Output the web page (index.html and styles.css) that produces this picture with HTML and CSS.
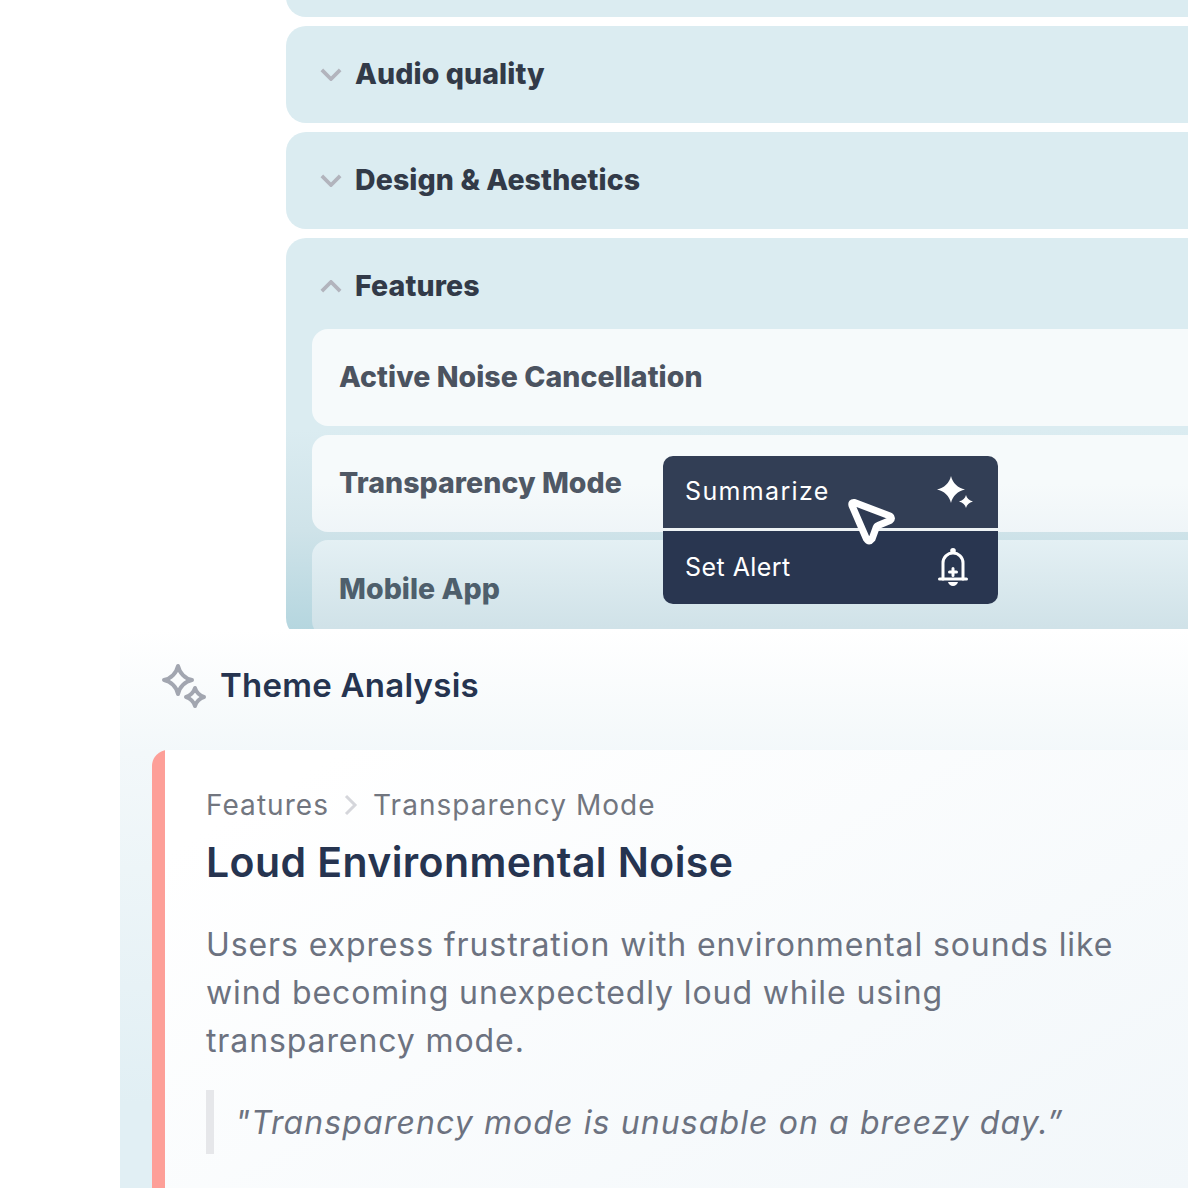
FILE: index.html
```html
<!DOCTYPE html>
<html lang="en">
<head>
<meta charset="utf-8">
<title>Theme Analysis</title>
<link rel="stylesheet" href="styles.css">
</head>
<body>
<div class="stage">
  <section class="upper">
    <div class="acc acc-top"></div>
    <div class="acc acc-closed">
      <svg class="chev" viewBox="0 0 24 14"><path d="M2 2l10 10L22 2"/></svg>
      <h2 class="acc-title">Audio quality</h2>
    </div>
    <div class="acc acc-closed">
      <svg class="chev" viewBox="0 0 24 14"><path d="M2 2l10 10L22 2"/></svg>
      <h2 class="acc-title">Design &amp; Aesthetics</h2>
    </div>
    <div class="acc acc-open">
      <div class="acc-head">
        <svg class="chev" viewBox="0 0 24 14"><path d="M2 12L12 2l10 10"/></svg>
        <h2 class="acc-title">Features</h2>
      </div>
      <div class="sub sub-a">Active Noise Cancellation</div>
      <div class="sub sub-b">Transparency Mode</div>
      <div class="sub sub-c">Mobile App</div>
    </div>
  </section>

  <div class="menu">
    <div class="menu-row menu-row-a">
      <span class="label-a">Summarize</span>
      <svg class="icon-spark" viewBox="0 0 36 32"><path d="M14 0C15.500 7 21 12 28 13.500 21 15 15.500 20 14 27 12.500 20 7 15 0 13.500 7 12 12.500 7 14 0Z"/><path d="M29 19C29.800 22 32 24.700 36 25.500 32 26.300 29.800 29 29 32 28.200 29 26 26.300 22 25.500 26 24.700 28.200 22 29 19Z"/></svg>
    </div>
    <div class="menu-row menu-row-b">
      <span class="label-b">Set Alert</span>
      <svg class="icon-bell" viewBox="0 0 30 38"><path class="line" d="M5 31V15a10 10 0 0 1 20 0v16"/><path class="line" d="M1.500 31h27M15 20.500v7M11.500 24h7"/><circle class="solid" cx="15" cy="2.800" r="2.800"/><path class="solid" d="M10 34h10c-.5 2.300-2.500 4-5 4s-4.500-1.700-5-4z"/></svg>
    </div>
    <svg class="cursor" viewBox="0 0 52 52"><path d="M7.500 6.500L43 20Q46 22 43 24.500L31 29.500Q29.500 30 29 32L25 43Q22 47 19.500 43L5 9.500Q4 6 7.500 6.500Z"/></svg>
  </div>

  <section class="lower">
    <header class="lower-head">
      <svg class="spark" viewBox="0 0 46 46"><path d="M17 3C18.500 10 24 15.500 31 17 24 18.500 18.500 24 17 31 15.500 24 10 18.500 3 17 10 15.500 15.500 10 17 3Z"/><path d="M34 25C35 29 39 33 43 34 39 35 35 39 34 43 33 39 29 35 25 34 29 33 33 29 34 25Z"/></svg>
      <h1 class="lower-title">Theme Analysis</h1>
    </header>
    <article class="card">
      <nav class="crumbs">
        <span>Features</span>
        <svg class="crumb-sep" viewBox="0 0 14 22"><path d="M2 2l9 9-9 9"/></svg>
        <span>Transparency Mode</span>
      </nav>
      <h3 class="card-title">Loud Environmental Noise</h3>
      <p class="card-body">Users express frustration with environmental sounds like wind becoming unexpectedly loud while using transparency mode.</p>
      <blockquote class="quote">"Transparency mode is unusable on a breezy day.”</blockquote>
    </article>
  </section>
</div>
</body>
</html>
```
FILE: styles.css
```css
* { box-sizing: border-box; }
html, body { margin: 0; padding: 0; background: #fff; }
body { font-family: Inter, "Noto Sans", "Liberation Sans", sans-serif; }
.stage { position: relative; width: 1188px; height: 1188px; overflow: hidden; display: flex; flex-direction: column; }

.upper { height: 709px; margin-top: -80px; padding-left: 286px; overflow: hidden; flex: none; width: 1388px; display: flex; flex-direction: column; gap: 9px; }
.acc { background: #dbecf1; border-radius: 20px; flex: none; }
.acc-top { height: 97px; }
.acc-closed { height: 97px; display: flex; align-items: center; padding-left: 34px; gap: 13px; }
.acc-open { padding: 0 0 0 26px; height: 400px; background: linear-gradient(180deg, #dbecf1 0%, #dbecf1 48%, #cfe3e9 73%, #b5d6df 98%); }
.acc-head { height: 91px; display: flex; align-items: center; padding: 5px 0 0 8px; gap: 13px; }
.chev { width: 22px; height: 13px; fill: none; stroke: #b2b4bd; stroke-width: 4; flex: none; }
.acc-title { margin: 0; font-size: 28.500px; font-weight: 800; color: #323a48; letter-spacing: .1px; line-height: 1; }
.sub { height: 97px; margin-bottom: 8.500px; border-radius: 16px; padding: 0 0 2px 27px; display: flex; align-items: center; font-size: 28.500px; font-weight: 800; letter-spacing: .05px; }
.sub-a { background: #f6fafb; color: #4b5360; }
.sub-b { background: linear-gradient(180deg, #f6fafb 50%, #eff5f8 100%); color: #4f5865; }
.sub-c { background: linear-gradient(180deg, #e4f0f4 0%, #d0e2e8 90%); color: #4e5f6c; padding-bottom: 0; }

.menu { position: absolute; left: 663px; top: 456px; width: 335px; z-index: 3; display: flex; flex-direction: column; }
.menu-row { display: flex; align-items: center; justify-content: space-between; padding-left: 22px; color: #fff; font-size: 25px; }
.menu-row-a { height: 72px; padding-right: 25px; background: #323e55; border-radius: 10px 10px 0 0; }
.menu-row-b { height: 75.500px; padding-right: 30px; background: #293650; border-radius: 0 0 10px 10px; border-top: 3.500px solid #eef3f5; }
.label-a { letter-spacing: 1.350px; position: relative; top: -1px; }
.label-b { letter-spacing: .45px; }
.icon-spark { width: 36px; height: 32px; flex: none; fill: #fff; }
.icon-bell { width: 30px; height: 38px; flex: none; }
.icon-bell .solid { fill: #fff; }
.icon-bell .line { fill: none; stroke: #fff; stroke-width: 3; stroke-linecap: round; }
.cursor { position: absolute; left: 184px; top: 40px; width: 52px; height: 52px; }
.cursor path { fill: #2e3a52; stroke: #fff; stroke-width: 7; stroke-linejoin: round; }

.lower { flex: 1; margin-left: 120px; width: 1068px; padding: 0 0 0 32px; background: linear-gradient(180deg, #fff 0%, #f3f8fa 22%, #e1eff4 85%); }
.lower-head { height: 121px; display: flex; align-items: center; gap: 13px; padding: 0 0 10px 9px; }
.spark { width: 46px; height: 46px; margin-top: 2px; fill: none; stroke: #a2a6b0; stroke-width: 4; stroke-linejoin: round; flex: none; }
.lower-title { margin: 0; font-size: 33px; font-weight: 600; color: #263450; letter-spacing: .25px; }
.card { height: 438px; border-radius: 16px 0 0 0; background: linear-gradient(150deg, #fff 10%, #f2f7fa 100%) 13px 0 / calc(100% - 13px) 100% no-repeat, #fd9f98; padding: 36px 0 0 54px; }
.crumbs { display: flex; align-items: center; gap: 15px; height: 38px; font-size: 28px; color: #72767f; letter-spacing: 1.050px; }
.crumb-sep { width: 14px; height: 22px; fill: none; stroke: #d5d6db; stroke-width: 3; }
.card-title { margin: 8px 0 0; font-size: 41px; line-height: 60px; font-weight: 600; color: #263450; letter-spacing: .4px; }
.card-body { margin: 29px 0 0; width: 925px; font-size: 32px; line-height: 48px; color: #6c7280; letter-spacing: .9px; }
.quote { margin: 25px 0 0; border-left: 8px solid #e6e7ea; height: 64px; padding-left: 21px; display: flex; align-items: center; font-size: 32px; font-style: italic; color: #6c7280; white-space: nowrap; letter-spacing: 1.100px; }
```
